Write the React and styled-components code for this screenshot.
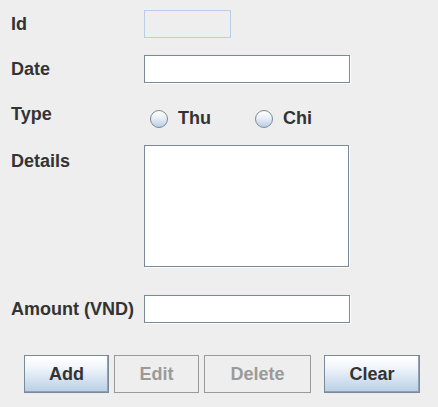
import React from 'react'
import styled, { createGlobalStyle } from 'styled-components'

const GlobalStyle = createGlobalStyle`
  html, body {
    margin: 0;
    padding: 0;
    background: #eeeeee;
  }
  body {
    font-family: "Liberation Sans", Arial, sans-serif;
  }
`

const Form = styled.div`
  width: 438px;
  height: 407px;
  background: #eeeeee;
  padding: 10px 0 0 11px;
  box-sizing: border-box;
  display: flex;
  flex-direction: column;
`

const Row = styled.div`
  display: flex;
  align-items: ${p => p.$align || 'center'};
  margin-top: ${p => p.$mt || 0}px;
`

const Label = styled.div`
  width: 133px;
  flex-shrink: 0;
  font-size: 18px;
  font-weight: bold;
  color: #333333;
  line-height: 20px;
  margin-top: ${p => p.$mt || 0}px;
`

const Field = styled.div`
  width: ${p => p.$w || 205}px;
  height: ${p => p.$h || 28}px;
  box-sizing: border-box;
  border: 1px solid ${p => (p.$disabled ? '#b8cfe5' : '#7a8a99')};
  background: ${p => (p.$disabled ? '#eeeeee' : '#ffffff')};
  box-shadow: ${p => (p.$disabled ? 'none' : '1px 1px 0 #ffffff')};
`

const RadioGroup = styled.div`
  display: flex;
  align-items: center;
  padding-left: 6px;
  margin-top: 3px;
`

const RadioItem = styled.label`
  display: flex;
  align-items: center;
  width: ${p => p.$w}px;
  font-size: 18px;
  font-weight: bold;
  color: #333333;
`

const RadioCircle = styled.span`
  width: 16px;
  height: 16px;
  border-radius: 50%;
  border: 1px solid #7a8a99;
  background: linear-gradient(#ffffff 0%, #e8eef6 45%, #b8cfe5 100%);
  margin-right: 10px;
  flex-shrink: 0;
`

const ButtonBar = styled.div`
  display: flex;
  margin-top: 32px;
  padding-left: 13px;
`

const Button = styled.button`
  width: ${p => p.$w}px;
  height: 38px;
  margin-left: ${p => p.$ml || 0}px;
  box-sizing: border-box;
  font-family: "Liberation Sans", Arial, sans-serif;
  font-size: 18px;
  font-weight: bold;
  padding: 0;
  border: 1px solid ${p => (p.disabled ? '#9a9a9a' : '#7a8a99')};
  color: ${p => (p.disabled ? '#9a9a9a' : '#333333')};
  background: ${p =>
    p.disabled
      ? '#eeeeee'
      : 'linear-gradient(#ffffff 0%, #f2f6fb 30%, #b8cfe5 100%)'};
  box-shadow: ${p => (p.disabled ? 'none' : 'inset -1px -1px 0 #8fa0b0')};
`

export default function App() {
  return (
    <>
      <GlobalStyle />
      <Form>
        <Row>
          <Label>Id</Label>
          <Field $w={87} $disabled />
        </Row>
        <Row $mt={17}>
          <Label>Date</Label>
          <Field $w={206} />
        </Row>
        <Row $mt={22} $align="flex-start">
          <Label $mt={-1}>Type</Label>
          <RadioGroup>
            <RadioItem $w={105}>
              <RadioCircle />
              Thu
            </RadioItem>
            <RadioItem $w={60}>
              <RadioCircle />
              Chi
            </RadioItem>
          </RadioGroup>
        </Row>
        <Row $mt={16} $align="flex-start">
          <Label $mt={6}>Details</Label>
          <Field $w={205} $h={122} />
        </Row>
        <Row $mt={28}>
          <Label>Amount (VND)</Label>
          <Field $w={206} />
        </Row>
        <ButtonBar>
          <Button $w={85}>Add</Button>
          <Button $w={85} $ml={5} disabled>Edit</Button>
          <Button $w={107} $ml={5} disabled>Delete</Button>
          <Button $w={96} $ml={13}>Clear</Button>
        </ButtonBar>
      </Form>
    </>
  )
}
